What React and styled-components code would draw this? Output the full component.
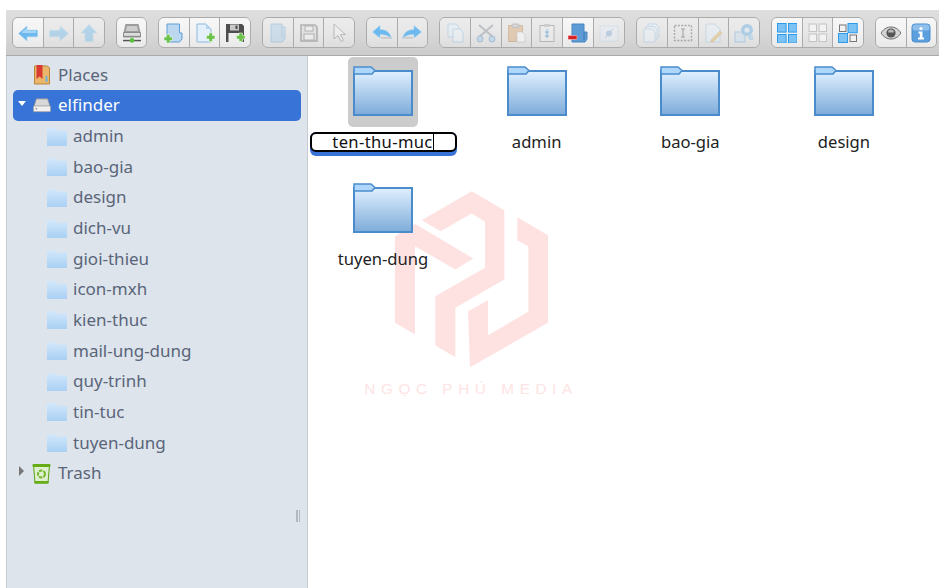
import React from 'react';
import styled, { createGlobalStyle } from 'styled-components';

const GlobalStyle = createGlobalStyle`
  html, body {
    margin: 0;
    padding: 0;
    height: 100%;
    background: #ffffff;
    overflow: hidden;
  }
  #root {
    height: 100%;
  }
`;

const Page = styled.div`
  width: 939px;
  height: 588px;
  padding: 10px 0 0 6px;
  box-sizing: border-box;
  display: flex;
  flex-direction: column;
  font-family: "Noto Sans", "Open Sans", sans-serif;
  overflow: hidden;
`;

const Toolbar = styled.div`
  display: flex;
  gap: 11px;
  height: 46px;
  padding: 7px 0 0 6px;
  box-sizing: border-box;
  background: linear-gradient(180deg, #dedede 0%, #d8d8d8 50%, #cbcbcb 100%);
  border-bottom: 1px solid #a9a9a9;
  flex-shrink: 0;
`;

const Group = styled.div`
  display: flex;
  width: ${props => props.$count * 31}px;
  height: 31px;
  border: 1px solid #ababab;
  border-radius: 6px;
  box-sizing: border-box;
  overflow: hidden;
  flex-shrink: 0;
`;

const Tool = styled.div`
  flex: 1;
  min-width: 0;
  height: 100%;
  display: flex;
  align-items: center;
  justify-content: center;
  box-sizing: border-box;
  background: ${props => props.$on
    ? 'linear-gradient(180deg, #f7f7f7 0%, #f2f2f2 50%, #e9e9e9 100%)'
    : 'linear-gradient(180deg, #ececec 0%, #e7e7e7 50%, #dedede 100%)'};
  & + & {
    border-left: 1px solid #ababab;
  }
  svg {
    flex-shrink: 0;
    opacity: ${props => props.$dim ? 0.42 : 1};
  }
`;

const Body = styled.div`
  display: flex;
  flex: 1;
  min-height: 0;
`;

const Sidebar = styled.div`
  position: relative;
  width: 302px;
  box-sizing: border-box;
  background: #dde4ec;
  border-left: 1px solid #c8ccd2;
  border-right: 1px solid #c8ccd2;
  padding: 3.4px 6px 0 6px;
  flex-shrink: 0;
`;

const TreeRow = styled.div`
  height: 30.67px;
  display: flex;
  align-items: center;
  box-sizing: border-box;
  padding-left: ${props => props.$sub ? '34px' : '4px'};
  border-radius: 5px;
  font-size: 17px;
  color: ${props => props.$active ? '#ffffff' : '#5a6579'};
  background: ${props => props.$active ? '#3874d8' : 'transparent'};
`;

const Arrow = styled.span`
  width: 0;
  height: 0;
  flex-shrink: 0;
  margin-right: 7px;
  ${props => props.$open
    ? 'border-left: 4px solid transparent; border-right: 4px solid transparent; border-top: 5px solid #ffffff; margin-left: 1px; margin-top: -3px;'
    : props.$closed
      ? 'border-top: 5px solid transparent; border-bottom: 5px solid transparent; border-left: 5px solid #777; margin-left: 2px; margin-right: 8px; margin-top: -4px;'
      : 'border: 0; margin-left: 15px; margin-right: 0;'}
`;

const TreeLabel = styled.span`
  margin-left: ${props => props.$sub ? '6px' : '7px'};
  line-height: 1;
  padding-bottom: 1px;
`;

const Grip = styled.div`
  position: absolute;
  right: 7px;
  top: 454px;
  width: 4px;
  height: 12px;
  border-left: 2px solid #b3b8bf;
  border-right: 1px solid #b3b8bf;
  box-sizing: border-box;
`;

const Cwd = styled.div`
  position: relative;
  flex: 1;
  background: #ffffff;
  padding: 1px 0 0 0;
  display: grid;
  grid-template-columns: repeat(4, 153.67px);
  grid-auto-rows: 117px;
  align-content: start;
`;

const Watermark = styled.div`
  position: absolute;
  left: 57px;
  top: 135px;
  width: 212px;
  display: flex;
  flex-direction: column;
  align-items: center;
  pointer-events: none;
`;

const WatermarkText = styled.div`
  margin-top: 12px;
  font-family: "Liberation Sans", sans-serif;
  font-size: 15.3px;
  line-height: 18px;
  letter-spacing: 5.6px;
  white-space: nowrap;
  color: #fee4e4;
`;

const FileCell = styled.div`
  position: relative;
  z-index: 1;
  display: flex;
  flex-direction: column;
  align-items: center;
  box-sizing: border-box;
  padding-right: 3.67px;
`;

const IconBox = styled.div`
  width: 70px;
  height: 70px;
  box-sizing: border-box;
  padding-bottom: 2px;
  display: flex;
  align-items: center;
  justify-content: center;
  border-radius: 5px;
  background: ${props => props.$selected ? '#cccccc' : 'transparent'};
`;

const FileName = styled.div`
  margin-top: 3px;
  font-size: 16.6px;
  line-height: 24px;
  color: #222222;
`;

const RenameBox = styled.div`
  margin-top: 5px;
  width: 147px;
  height: 24px;
  box-sizing: border-box;
  border-radius: 6px;
  background: #3874d8;
`;

const RenameInput = styled.div`
  height: 20px;
  box-sizing: border-box;
  border: 2px solid #000000;
  border-radius: 6px;
  background: #ffffff;
  font-size: 16.6px;
  line-height: 16px;
  letter-spacing: 0.35px;
  color: #111111;
  text-align: center;
  white-space: nowrap;
`;

const Caret = styled.span`
  display: inline-block;
  width: 1px;
  height: 16px;
  background: #000000;
  vertical-align: top;
`;

const Ico = ({ children, w = 20, h = 20 }) => (
  <svg width={w} height={h} viewBox="0 0 20 20">{children}</svg>
);

const Plus = () => (
  <path d="M11.500 12.500h2.500V10h3.500v2.500H20v3.500h-2.500v2.500H14V16h-2.500z" fill="#6cc24a" stroke="#e8f8e0" strokeWidth=".6" />
);

const BackIcon = () => (
  <Ico>
    <path d="M0.500 10.500 9 3v4.200h10.500v6.600H9V18z" fill="#6db8ec" stroke="#9fd2f4" strokeWidth=".6" />
    <path d="M4 9 9 5v3h9v2H4z" fill="#a5d6f7" />
  </Ico>
);
const ForwardIcon = () => (
  <Ico><path d="M19.500 10.500 11 3v4.200H.5v6.600H11V18z" fill="#6db8ec" stroke="#9fd2f4" strokeWidth=".6" /></Ico>
);
const UpIcon = () => (
  <Ico><path d="M10 1.500 18 10h-4v8.500H6V10H2z" fill="#6db8ec" stroke="#9fd2f4" strokeWidth=".6" /></Ico>
);
const NetIcon = () => (
  <Ico>
    <path d="M3.500 1h13l2 8.500H1.500z" fill="#9c9c9c" />
    <path d="M5 3h10l1 5H4z" fill="#cdcdcd" />
    <rect x="1" y="9" width="18" height="5.500" rx="1" fill="#8b8b8b" />
    <rect x="2" y="10" width="16" height="2.800" fill="#dcdcdc" />
    <rect x="1" y="16.800" width="18" height="1.500" fill="#555" />
    <circle cx="10" cy="17.400" r="2.300" fill="#57c43c" />
  </Ico>
);
const MkdirIcon = () => (
  <Ico>
    <path d="M3 1h12.500v9H18v6l-2.500 3H3z" fill="#bcd8f1" stroke="#5f9dd4" strokeWidth="1" />
    <path d="M0 14h2.500v-2.500H6V14h2.500v3.500H6V20H2.500v-2.500H0z" fill="#6cc24a" stroke="#e8f8e0" strokeWidth=".6" />
  </Ico>
);
const MkfileIcon = () => (
  <Ico>
    <path d="M2 1h9l5 5v13H2z" fill="#e3f0fb" stroke="#8db9de" strokeWidth="1" />
    <path d="M11 1v5h5z" fill="#b6d6ef" />
    <Plus />
  </Ico>
);
const SaveIcon = () => (
  <Ico>
    <path d="M1 1h16l2 2v16H1z" fill="#4e4e4e" />
    <rect x="5" y="1.500" width="9" height="6" fill="#c9c9c9" />
    <rect x="10.500" y="2.500" width="2" height="3.500" fill="#4e4e4e" />
    <rect x="3.500" y="10" width="13" height="9" fill="#eeeeee" />
    <Plus />
  </Ico>
);
const OpenIcon = () => (
  <Ico>
    <path d="M3 1h11v3h3v12l-3 3H3z" fill="#a7cdea" stroke="#6fa7d4" strokeWidth="1" />
    <path d="M14 4v11" stroke="#6fa7d4" fill="none" />
  </Ico>
);
const FloppyIcon = () => (
  <Ico>
    <path d="M2 2h14l2 2v14H2z" fill="#d8d8d8" stroke="#666" strokeWidth="1.600" />
    <rect x="6" y="3" width="8" height="5" fill="#f2f2f2" stroke="#666" />
    <rect x="5" y="11" width="10" height="6" fill="#f5f5f5" stroke="#666" />
  </Ico>
);
const CursorIcon = () => (
  <Ico><path d="M5 1v15l4-3.500 3 6 2.500-1.200-3-5.800h5z" fill="#f5f5f5" stroke="#777" strokeWidth="1" /></Ico>
);
const UndoIcon = () => (
  <Ico>
    <path d="M.5 9 8 2.500v4c6 0 10.500 3 11.500 9.500-2-3-5.500-4.500-11.500-4.500V15z" fill="#6db8ec" stroke="#a5d6f7" strokeWidth=".6" />
    <rect x="9" y="14" width="10" height="1.600" fill="#c7c7c7" />
  </Ico>
);
const RedoIcon = () => (
  <Ico>
    <path d="M19.500 9 12 2.500v4C6 6.500 1.500 9.500.5 16c2-3 5.500-4.500 11.500-4.500V15z" fill="#6db8ec" stroke="#a5d6f7" strokeWidth=".6" />
    <rect x="1" y="14" width="10" height="1.600" fill="#c7c7c7" />
  </Ico>
);
const CopyIcon = () => (
  <Ico>
    <path d="M3 1h8l3 3v10H3z" fill="#e3f0fb" stroke="#8db9de" />
    <path d="M8 6h7l3 3v10H8z" fill="#eef6fd" stroke="#8db9de" />
  </Ico>
);
const CutIcon = () => (
  <Ico>
    <path d="M3 2 17 14M17 2 3 14" stroke="#808a94" strokeWidth="2" fill="none" />
    <circle cx="4" cy="16" r="3" fill="#9cc7e8" stroke="#4a8bc9" />
    <circle cx="16" cy="16" r="3" fill="#9cc7e8" stroke="#4a8bc9" />
  </Ico>
);
const PasteIcon = () => (
  <Ico>
    <rect x="1.500" y="2.500" width="14" height="16" fill="#d9a26b" stroke="#b67c45" />
    <rect x="5" y="1" width="7" height="3.500" rx="1" fill="#b7b7b7" stroke="#888" />
    <path d="M10 9h5l3 3v7h-8z" fill="#ffffff" stroke="#999" strokeWidth=".6" />
  </Ico>
);
const DuplicateIcon = () => (
  <Ico>
    <rect x="3" y="2.500" width="14" height="16" fill="#eeeeee" stroke="#777" />
    <rect x="7" y="1" width="6" height="3" fill="#aaa" />
    <path d="M10 6v4M8.300 8.500 10 10.500l1.700-2M10 15v-3M8.300 13.500 10 11.800l1.700 1.700" stroke="#3f8fd0" strokeWidth="1.200" fill="none" />
  </Ico>
);
const RmIcon = () => (
  <Ico>
    <path d="M4 1h12v8h3v7l-2 3H4z" fill="#5c9bd6" stroke="#4a86c0" strokeWidth="1" />
    <path d="M16 9v8" stroke="#3a78b4" fill="none" />
    <rect x="0" y="12.500" width="9" height="4" rx=".8" fill="#d8232a" stroke="#f3c4c4" strokeWidth=".6" />
  </Ico>
);
const ExtractIcon = () => (
  <Ico>
    <rect x="1" y="3" width="18" height="15" fill="#e4eefa" stroke="#b9d2ea" />
    <circle cx="10" cy="10.500" r="3" fill="#82a9d4" />
    <path d="M6 15 14 6" stroke="#7ea4d0" strokeWidth="1" fill="none" />
  </Ico>
);
const CopiesIcon = () => (
  <Ico>
    <path d="M6 1h8l3 3v10H6z" fill="#e3f0fb" stroke="#9cc0de" />
    <path d="M4 3.500h8l3 3v10H4z" fill="#e3f0fb" stroke="#9cc0de" />
    <path d="M2 6h8l3 3v10H2z" fill="#eef6fd" stroke="#9cc0de" />
  </Ico>
);
const RenameIcon = () => (
  <Ico>
    <rect x="1.500" y="2.500" width="17" height="15" fill="none" stroke="#555" strokeWidth="1.400" strokeDasharray="2 1.400" />
    <path d="M8 6h4M8 14h4M10 6v8" stroke="#444" strokeWidth="1.100" fill="none" />
  </Ico>
);
const EditIcon = () => (
  <Ico>
    <path d="M3 1h9l5 5v13H3z" fill="#e3f0fb" stroke="#9cc0de" />
    <path d="M8 17 17 8l2 2-9 9H8z" fill="#e8b24c" stroke="#a9813a" strokeWidth=".5" />
  </Ico>
);
const ResizeIcon = () => (
  <Ico>
    <rect x="1" y="9" width="10" height="10" fill="#c6ddf2" stroke="#6aa6d8" />
    <circle cx="13" cy="7" r="6" fill="#5ea9e3" />
    <circle cx="13" cy="7" r="2.600" fill="#d4e8f8" />
    <path d="M13 12h6v5h-4z" fill="#8fc2ea" />
  </Ico>
);
const GridLargeIcon = () => (
  <Ico>
    {[[0, 0], [11, 0], [0, 11], [11, 11]].map(([x, y]) => (
      <rect key={`${x}${y}`} x={x + 0.5} y={y + 0.5} width="8.600" height="8.600" fill="#7cc2f5" stroke="#2d9bea" strokeWidth="1" />
    ))}
  </Ico>
);
const GridSmallIcon = () => (
  <Ico>
    {[[1, 1], [11, 1], [1, 11], [11, 11]].map(([x, y]) => (
      <rect key={`${x}${y}`} x={x} y={y} width="7.500" height="7.500" fill="#f3f3f3" stroke="#c4c4c4" strokeWidth="1" />
    ))}
  </Ico>
);
const GridMixedIcon = () => (
  <Ico>
    <rect x="1.500" y="2" width="6.500" height="6.500" fill="#f3f3f3" stroke="#777" />
    <rect x="10" y="0.500" width="9.200" height="9.200" fill="#7cc2f5" stroke="#2d9bea" />
    <rect x="0.500" y="10.500" width="9" height="9" fill="#7cc2f5" stroke="#2d9bea" />
    <rect x="12" y="12" width="6.500" height="6.500" fill="#f3f3f3" stroke="#777" />
  </Ico>
);
const EyeIcon = () => (
  <Ico>
    <path d="M0 10C3 5.500 6.500 4 10 4s7 1.500 10 6c-3 4.500-6.500 6-10 6s-7-1.500-10-6z" fill="#d4d4d4" stroke="#6a6a6a" strokeWidth="1" />
    <circle cx="10" cy="10" r="4.600" fill="#555" />
    <path d="M7 9.500a3 3 0 0 1 6 0z" fill="#b8b8b8" />
  </Ico>
);
const InfoIcon = () => (
  <Ico>
    <rect x="1" y="1" width="18" height="18" rx="3" fill="#5b9fdf" stroke="#4a8ccb" />
    <rect x="1.500" y="1.500" width="17" height="6" rx="2.500" fill="#8fc0ec" />
    <circle cx="10" cy="5.500" r="1.600" fill="#ffffff" />
    <path d="M7.500 8.500H11.500V14.500H13V16.500H7V14.500H8.800V10.500H7.500z" fill="#ffffff" />
  </Ico>
);

const toolGroups = [
  [{ Icon: BackIcon, on: true }, { Icon: ForwardIcon, dim: true }, { Icon: UpIcon, dim: true }],
  [{ Icon: NetIcon, on: true }],
  [{ Icon: MkdirIcon, on: true }, { Icon: MkfileIcon, on: true }, { Icon: SaveIcon, on: true }],
  [{ Icon: OpenIcon, dim: true }, { Icon: FloppyIcon, dim: true }, { Icon: CursorIcon, dim: true }],
  [{ Icon: UndoIcon }, { Icon: RedoIcon }],
  [
    { Icon: CopyIcon, dim: true },
    { Icon: CutIcon, dim: true },
    { Icon: PasteIcon, dim: true },
    { Icon: DuplicateIcon, dim: true },
    { Icon: RmIcon, on: true },
    { Icon: ExtractIcon, dim: true },
  ],
  [{ Icon: CopiesIcon, dim: true }, { Icon: RenameIcon, dim: true }, { Icon: EditIcon, dim: true }, { Icon: ResizeIcon, dim: true }],
  [{ Icon: GridLargeIcon, on: true }, { Icon: GridSmallIcon }, { Icon: GridMixedIcon, on: true }],
  [{ Icon: EyeIcon, on: true }, { Icon: InfoIcon, on: true }],
];

const PlacesIcon = () => (
  <svg width="19" height="20" viewBox="0 0 18 20">
    <path d="M2 1h13l2 2v16H2z" fill="#e9b66a" stroke="#b9843c" strokeWidth="1" />
    <rect x="4" y="0" width="6" height="14" fill="#d93a32" />
    <path d="M4 14 7 11.500 10 14z" fill="#e9b66a" />
    <rect x="13" y="11" width="2" height="6" fill="#6fb4d8" />
  </svg>
);

const DriveIcon = () => (
  <svg width="18" height="15" viewBox="0 0 19 15">
    <path d="M3.500 .5h12l2.500 8H1z" fill="#d8d8d8" stroke="#8e8e8e" strokeWidth=".8" />
    <rect x=".5" y="8" width="18" height="6" rx="1" fill="#f0f0f0" stroke="#a0a0a0" strokeWidth=".8" />
    <circle cx="3.500" cy="11" r=".8" fill="#7a7a7a" />
  </svg>
);

const TrashIcon = () => (
  <svg width="19" height="21" viewBox="0 0 18 21">
    <path d="M1 2h16l-1.500 18h-13z" fill="#dff0d0" stroke="#5da112" strokeWidth="1" />
    <rect x="0" y="1" width="18" height="3" rx="1" fill="#67ad16" />
    <rect x="2" y="18" width="14" height="2.500" fill="#67ad16" />
    <circle cx="9" cy="11" r="3.500" fill="none" stroke="#74b82a" strokeWidth="2" strokeDasharray="3.500 1" />
  </svg>
);

const SmallFolder = () => (
  <svg width="20" height="19" viewBox="0 0 20 19">
    <defs>
      <linearGradient id="smallFolder" x1="0" y1="0" x2="0" y2="1">
        <stop offset="0" stopColor="#d3e8fb" />
        <stop offset="1" stopColor="#a9d0f4" />
      </linearGradient>
    </defs>
    <path d="M1 1h7l2 2.500h10V19H0V2z" fill="url(#smallFolder)" />
  </svg>
);

const BigFolder = () => (
  <svg width="60" height="50" viewBox="0 0 60 50">
    <defs>
      <linearGradient id="bigFolder" x1="0" y1="0" x2="0" y2="1">
        <stop offset="0" stopColor="#e0f0ff" />
        <stop offset="1" stopColor="#7dabd9" />
      </linearGradient>
    </defs>
    <rect x="1" y="5" width="58" height="44" fill="url(#bigFolder)" stroke="#4a8ccb" strokeWidth="2" />
    <path d="M1 1h17l4 3.500-3 3.500H1z" fill="#afd6fb" stroke="#4a8ccb" strokeWidth="1.500" />
  </svg>
);

const LogoMark = () => (
  <svg width="153" height="177" viewBox="135 35 459 530">
    <g fill="#fee2e2">
      <path d="M135 170 195 133 370 237 316 270 195 200V465L135 430z" />
      <path d="M215 122 365 35 463 92V300L316 385V533L256 498V350L405 265V127L365 102 272 155z" />
      <path d="M502 113 594 167V430L360 563 354 395 414 362V467L535 397V200L502 182z" />
    </g>
  </svg>
);

const subFolders = ['admin', 'bao-gia', 'design', 'dich-vu', 'gioi-thieu', 'icon-mxh', 'kien-thuc', 'mail-ung-dung', 'quy-trinh', 'tin-tuc', 'tuyen-dung'];
const files = ['admin', 'bao-gia', 'design', 'tuyen-dung'];

const App = () => (
  <>
    <GlobalStyle />
    <Page>
      <Toolbar>
        {toolGroups.map((tools, g) => (
          <Group key={g} $count={tools.length}>
            {tools.map(({ Icon, on, dim }, i) => (
              <Tool key={i} $on={on} $dim={dim}><Icon /></Tool>
            ))}
          </Group>
        ))}
      </Toolbar>
      <Body>
        <Sidebar>
          <TreeRow>
            <Arrow />
            <PlacesIcon />
            <TreeLabel>Places</TreeLabel>
          </TreeRow>
          <TreeRow $active>
            <Arrow $open />
            <DriveIcon />
            <TreeLabel>elfinder</TreeLabel>
          </TreeRow>
          {subFolders.map(name => (
            <TreeRow key={name} $sub>
              <SmallFolder />
              <TreeLabel $sub>{name}</TreeLabel>
            </TreeRow>
          ))}
          <TreeRow>
            <Arrow $closed />
            <TrashIcon />
            <TreeLabel>Trash</TreeLabel>
          </TreeRow>
          <Grip />
        </Sidebar>
        <Cwd>
          <Watermark>
            <LogoMark />
            <WatermarkText>NGỌC PHÚ MEDIA</WatermarkText>
          </Watermark>
          <FileCell>
            <IconBox $selected><BigFolder /></IconBox>
            <RenameBox>
              <RenameInput>ten-thu-muc<Caret /></RenameInput>
            </RenameBox>
          </FileCell>
          {files.map(name => (
            <FileCell key={name}>
              <IconBox><BigFolder /></IconBox>
              <FileName>{name}</FileName>
            </FileCell>
          ))}
        </Cwd>
      </Body>
    </Page>
  </>
);

export default App;
